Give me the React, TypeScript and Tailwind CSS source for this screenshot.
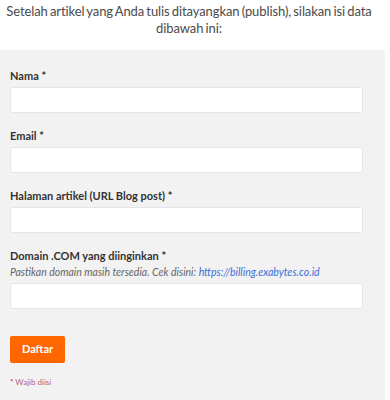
import React from 'react';

const Field: React.FC<{ label: string; hint?: React.ReactNode }> = ({ label, hint }) => (
  <div className="flex flex-col">
    <label className="text-[11px] font-bold leading-[14px] text-[#333]">{label} *</label>
    {hint}
    <input
      type="text"
      className="mt-[4px] h-[26px] w-[353px] rounded-[2px] border border-[#e6e6e6] bg-white outline-none"
    />
  </div>
);

export default function App() {
  return (
    <div className="w-[390px] h-[400px] bg-white" style={{ fontFamily: 'Lato, "Open Sans", sans-serif' }}>
      <p className="w-[378px] pt-[3px] text-center text-[13px] leading-[17px] text-[#4a4a4a] tracking-[-0.1px] [word-spacing:-1px]">
        Setelah artikel yang Anda tulis ditayangkan (publish), silakan isi data dibawah ini:
      </p>
      <div className="mt-[13px] w-[385px] h-[350px] bg-[#f2f2f2] pl-[10px] pt-[19px]">
        <div className="flex flex-col gap-[16px]">
          <Field label="Nama" />
          <Field label="Email" />
          <Field label="Halaman artikel (URL Blog post)" />
          <Field
            label="Domain .COM yang diinginkan"
            hint={
              <p className="mt-[3px] text-[10.5px] italic leading-[13px] text-[#666]">
                Pastikan domain masih tersedia. Cek disini:{' '}
                <a className="text-[#3d6fd6]">https://billing.exabytes.co.id</a>
              </p>
            }
          />
        </div>
        <button className="mt-[27px] h-[27px] w-[55px] rounded-[2px] bg-[#ff6600] text-[11px] font-bold text-white">
          Daftar
        </button>
        <p className="mt-[13px] text-[8px] leading-[12px] text-[#b5607d]">
          <span className="text-[#c0392b]">*</span> Wajib diisi
        </p>
      </div>
    </div>
  );
}
